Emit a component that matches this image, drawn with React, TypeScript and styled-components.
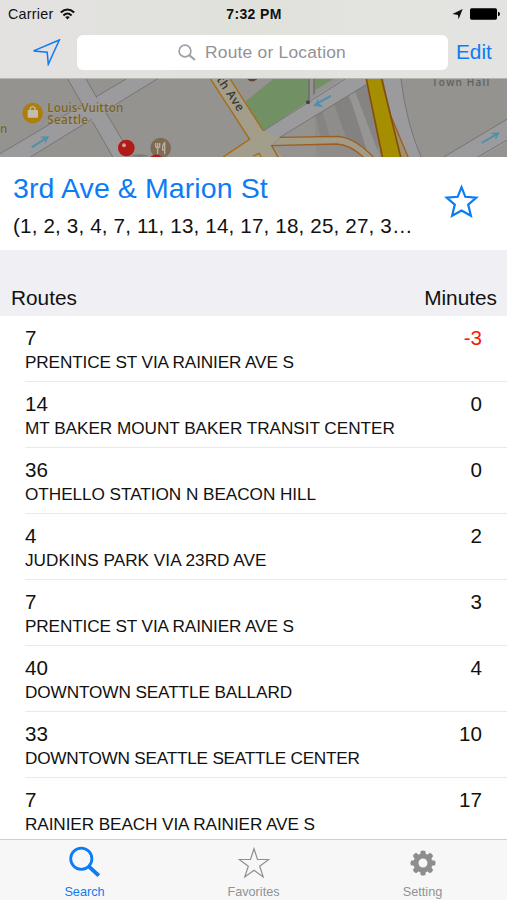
import React from "react";
import styled, { createGlobalStyle } from "styled-components";

const BLUE = "#0b7cf5";

const GlobalStyle = createGlobalStyle`
  * { box-sizing: border-box; }
  body { margin: 0; background: #fff; font-family: "Liberation Sans", Arial, sans-serif; color: #111; }
  svg { display: block; flex: none; }
`;

const Screen = styled.div`
  width: 507px;
  height: 900px;
  display: flex;
  flex-direction: column;
  overflow: hidden;
  background: #fff;
`;

const TopBar = styled.header`
  flex: none;
  height: 79px;
  background: linear-gradient(90deg, #e3e2e0 0%, #e1e1de 35%, #dfe1da 50%, #e3e3df 70%, #e3e3e2 100%);
  border-bottom: 1px solid #b4b3b1;
`;

const StatusBar = styled.div`
  height: 28px;
  display: grid;
  grid-template-columns: 1fr auto 1fr;
  align-items: center;
  padding: 0 7px 0 8px;
`;

const Carrier = styled.div`
  display: flex;
  align-items: center;
  gap: 7px;
  font-size: 14.4px;
  letter-spacing: 0.2px;
  line-height: 28px;
`;

const Clock = styled.div`
  font-size: 14px;
  font-weight: 700;
  letter-spacing: 0.35px;
  line-height: 28px;
`;

const StatusIcons = styled.div`
  display: flex;
  align-items: center;
  justify-content: flex-end;
  gap: 7px;
`;

const NavRow = styled.div`
  display: flex;
  align-items: center;
  height: 48px;
  padding: 0 15px 0 32px;
`;

const SearchField = styled.div`
  display: flex;
  align-items: center;
  justify-content: center;
  gap: 9px;
  width: 371px;
  height: 35px;
  margin: 0 8px 0 16px;
  padding-right: 1px;
  border-radius: 6px;
  background: #fff;
  color: #929295;
  font-size: 17.4px;
  letter-spacing: 0.22px;
`;

const EditButton = styled.div`
  color: ${BLUE};
  font-size: 20.8px;
  line-height: 24px;
`;

const MapStrip = styled.div`
  flex: none;
  height: 78px;
`;

const StopHeader = styled.section`
  flex: none;
  height: 93px;
  display: flex;
  justify-content: space-between;
  background: #fff;
  padding: 13px 28px 0 13px;
`;

const StopText = styled.div`
  display: flex;
  flex-direction: column;
`;

const StopName = styled.div`
  color: ${BLUE};
  font-size: 28.5px;
  letter-spacing: 0.1px;
  line-height: 36px;
`;

const StopRoutes = styled.div`
  font-size: 20.6px;
  letter-spacing: 0.16px;
  line-height: 40px;
  white-space: nowrap;
`;

const StarSlot = styled.div`
  padding-top: 14px;
`;

const ColumnHeader = styled.div`
  flex: none;
  height: 66px;
  display: flex;
  justify-content: space-between;
  align-items: flex-end;
  padding: 0 10px 6px 11px;
  background: #efeff4;
  font-size: 20.8px;
  line-height: 24px;
`;

const List = styled.div`
  flex: none;
  height: 523px;
  overflow: hidden;
`;

const Row = styled.div`
  height: 66px;
  margin-left: 25px;
  padding: 10px 25px 0 0;
  display: flex;
  justify-content: space-between;
  border-bottom: 1px solid #e9e9eb;
`;

const RouteInfo = styled.div`
  display: flex;
  flex-direction: column;
  gap: 1px;
`;

const RouteNumber = styled.div`
  font-size: 20.6px;
  line-height: 24px;
`;

const Destination = styled.div<{ $spacing: number }>`
  font-size: 17.2px;
  line-height: 22px;
  white-space: nowrap;
  letter-spacing: ${(p) => p.$spacing}px;
`;

const Minutes = styled.div<{ $late?: boolean }>`
  font-size: 20.6px;
  line-height: 24px;
  color: ${(p) => (p.$late ? "#fb150f" : "#111")};
`;

const TabBar = styled.nav`
  flex: none;
  height: 61px;
  display: grid;
  grid-template-columns: repeat(3, 1fr);
  background: #f7f7f7;
  border-top: 1px solid #d0d0d0;
`;

const Tab = styled.div<{ $active?: boolean }>`
  display: flex;
  flex-direction: column;
  align-items: center;
  padding-top: 6px;
  gap: 5px;
  color: ${(p) => (p.$active ? BLUE : "#929292")};
  font-size: 12.7px;
  line-height: 16px;
`;

const WifiIcon = () => (
  <svg width="15" height="12" viewBox="0 0 15 12" fill="none" stroke="#111" strokeWidth="2">
    <path d="M.8 4.6Q7.5-1.6 14.2 4.6" />
    <path d="M3.4 7.4Q7.5 3.6 11.6 7.4" />
    <path d="M7.5 11.6 5.2 9.1Q7.5 7.2 9.8 9.1Z" fill="#111" stroke="none" />
  </svg>
);

const LocationIcon = () => (
  <svg width="11" height="11" viewBox="0 0 11 11">
    <path d="M10.7 0 6.6 10.3 5.9 6 .4 5.1Z" fill="#111" />
  </svg>
);

const BatteryIcon = () => (
  <svg width="30" height="12" viewBox="0 0 30 12">
    <rect x="0" y=".3" width="27" height="11.4" rx="1.6" fill="#000" />
    <path d="M28 3.8q2 .3 2 2.2t-2 2.2z" fill="#000" />
  </svg>
);

const ArrowIcon = () => (
  <svg width="29" height="27" viewBox="0 0 29 27" fill="none" stroke={BLUE} strokeWidth="1.5">
    <path d="M27.3 1 1.6 11.9 15.2 13.2 16.3 25.3Z" />
  </svg>
);

const SmallSearchIcon = () => (
  <svg width="18" height="17" viewBox="0 0 18 17" fill="none" stroke="#a2a2a5" strokeWidth="1.7">
    <circle cx="7" cy="7" r="5.9" />
    <path d="M11.2 11.2 17 16" strokeWidth="2.2" />
  </svg>
);

const BlueStar = () => (
  <svg width="35" height="34" viewBox="0 0 35 34" fill="none" stroke={BLUE} strokeWidth="2.2">
    <path d="M17.5 3.2 21.3 12.8 32.3 13.7 24.2 20.6 26.9 31.8 17.5 26.6 8.1 31.8 10.8 20.6 2.7 13.7 13.7 12.8Z" />
  </svg>
);

const SearchTabIcon = () => (
  <svg width="32" height="33" viewBox="0 0 32 33" fill="none" stroke={BLUE}>
    <circle cx="12.3" cy="12.7" r="10.6" strokeWidth="2.8" />
    <path d="M20 20.6 29.8 29.6" strokeWidth="4" />
  </svg>
);

const StarTabIcon = () => (
  <svg width="32" height="33" viewBox="0 0 32 33" fill="none" stroke="#8e8e8e" strokeWidth="1.2">
    <path d="M16 2.8 19.5 13.5 30.8 13.5 21.7 20.2 25.2 30.9 16 24.3 6.8 30.9 10.3 20.2 1.2 13.5 12.5 13.5Z" />
  </svg>
);

const GearIcon = () => (
  <svg width="32" height="33" viewBox="-16 -17 32 33">
    <circle r="7" fill="none" stroke="#8e8e8e" strokeWidth="5" />
    {[0, 45, 90, 135, 180, 225, 270, 315].map((angle) => (
      <path key={angle} d="M-3-8-2.3-12.1Q0-13.1 2.3-12.1L3-8Z" fill="#8e8e8e" transform={`rotate(${angle})`} />
    ))}
  </svg>
);

const MapDrawing = () => (
  <svg width="507" height="78" viewBox="0 9 1521 234" preserveAspectRatio="none">
    <rect width="1521" height="252" fill="#949390" />
    <path d="M-30 251 385 5H478L88 245Z" fill="#9b9b9d" stroke="#777674" strokeWidth="3" />
    <path d="M205 9 340 243H378L366 193 256 9Z" fill="#9b9b9d" />
    <path d="M248 88 201 5M291 66 256 5M277 136 340 246M317 109 372 200" stroke="#777674" strokeWidth="3" fill="none" />

    <path d="M820 9H928V84L790 165 759 115 737 76Z" fill="#719064" />
    <path d="M945 9H1000L942 44Z" fill="#719064" />
    <path d="M927 5V80M942 5V55" stroke="#73716f" strokeWidth="5" />
    <path d="M940 90 1070 25 1150 243H950Z" fill="#8e8d8a" />
    <path d="M942 100 962 90 990 184H962Z" fill="#858482" />
    <path d="M1003 85 1043 60 1110 184 1125 243 1040 190Z" fill="#838280" />
    <path d="M1046 52 1065 45 1140 243H1107Z" fill="#979694" />
    <path d="M1065 45 1098 25 1145 200 1130 215Z" fill="#858483" />
    <path d="M790 165 1030 5H1130L836 187 805 215 770 190Z" fill="#9b9b9d" />
    <path d="M790 165 1035 9M838 185 1112 18" stroke="#777674" strokeWidth="3" fill="none" />
    <circle cx="924" cy="79" r="6" fill="#444" />

    <path d="M629 5 749 190 665 246H850L815 207 836 185 790 165 690 5Z" fill="#a29e8b" />
    <path d="M629 5 749 190 665 246M688 5 790 165M759 240 778 232 784 243" stroke="#a66b13" strokeWidth="4" fill="none" />
    <path d="M840 184H1015Q1065 186 1120 243H1090Q1047 203 1010 204L821 209Z" fill="#a29c86" />
    <path d="M840 184 1015 181Q1065 186 1120 243M836 246 815 209 1010 204Q1047 205 1090 243" fill="none" stroke="#9d5d21" strokeWidth="4" />
    <path d="M742 9Q756 24 772 9Z" fill="#61422d" />

    <path d="M1144 5 1167 110 1220 245H1264Q1216 130 1202 5Z" fill="#9b9b9d" />
    <path d="M1202 5Q1220 145 1264 245M1147 5Q1160 70 1171 110" stroke="#777674" strokeWidth="3" fill="none" />
    <path d="M1160 90 1226 247H1200Z" fill="#a08f6a" stroke="#9d5d21" strokeWidth="4" />
    <path d="M1098 5H1144L1203 247H1148Z" fill="#a58e00" stroke="#83500c" strokeWidth="5" />

    <path d="M1320 250 1530 126V194L1430 250Z" fill="#9b9b9d" />
    <path d="M1330 244 1530 124M1425 248 1530 187" stroke="#777674" strokeWidth="3" />

    <g stroke="#4d91ae" strokeWidth="6" fill="none">
      <path d="M95 214 138 187" />
      <path d="M992 60 952 82" />
      <path d="M1445 201 1488 176" />
    </g>
    <g fill="#4d91ae">
      <path d="M147 181 136 204 135 190 119 182Z" />
      <path d="M940 90 955 68 956 80 970 93Z" />
      <path d="M1499 169 1487 192 1486 178 1471 171Z" />
    </g>

    <circle cx="98" cy="111" r="31" fill="#ac7e0a" />
    <rect x="83" y="102" width="31" height="23" rx="3" fill="#c6bda8" />
    <path d="M91 102V96Q98 88 105 96V102" stroke="#c6bda8" strokeWidth="4" fill="none" />
    <g fontFamily="Open Sans, sans-serif" fontWeight="600">
      <g fill="#7a6326" stroke="#a3a09a" strokeWidth="3" paintOrder="stroke" fontSize="35">
        <text x="142" y="107" textLength="228">Louis-Vuitton</text>
        <text x="142" y="143" textLength="122">Seattle</text>
        <text x="0" y="170">n</text>
      </g>
      <text x="1296" y="29" fill="#62615f" fontSize="30" textLength="172">Town Hall</text>
      <text transform="translate(644 4) rotate(56)" x="-14" y="0" fill="#3b3a38" stroke="#a29e8b" strokeWidth="3" paintOrder="stroke" fontSize="36" textLength="140">5th Ave</text>
    </g>
    <circle cx="482" cy="216" r="31" fill="#7f6b53" />
    <path d="M467 201V212Q473 220 479 212V201M473 201V234M494 235V200Q486 207 488 222H494" stroke="#b9b1a6" strokeWidth="4" fill="none" />
    <path d="M450 243Q468 228 487 243Z" fill="#b01b19" />
    <ellipse cx="420" cy="239" rx="24" ry="4" fill="#7c7b78" />
    <circle cx="379" cy="216" r="25" fill="#b01b19" />
    <circle cx="372" cy="208" r="6" fill="#df9892" />
  </svg>
);

type Departure = { route: string; destination: string; minutes: string; spacing: number };

const departures: Departure[] = [
  { route: "7", destination: "PRENTICE ST VIA RAINIER AVE S", minutes: "-3", spacing: -0.13 },
  { route: "14", destination: "MT BAKER MOUNT BAKER TRANSIT CENTER", minutes: "0", spacing: -0.04 },
  { route: "36", destination: "OTHELLO STATION N BEACON HILL", minutes: "0", spacing: -0.05 },
  { route: "4", destination: "JUDKINS PARK VIA 23RD AVE", minutes: "2", spacing: 0.02 },
  { route: "7", destination: "PRENTICE ST VIA RAINIER AVE S", minutes: "3", spacing: -0.13 },
  { route: "40", destination: "DOWNTOWN SEATTLE BALLARD", minutes: "4", spacing: -0.11 },
  { route: "33", destination: "DOWNTOWN SEATTLE SEATTLE CENTER", minutes: "10", spacing: -0.23 },
  { route: "7", destination: "RAINIER BEACH VIA RAINIER AVE S", minutes: "17", spacing: -0.1 },
];

export default function App() {
  return (
    <>
      <GlobalStyle />
      <Screen>
        <TopBar>
          <StatusBar>
            <Carrier>Carrier <WifiIcon /></Carrier>
            <Clock>7:32 PM</Clock>
            <StatusIcons><LocationIcon /><BatteryIcon /></StatusIcons>
          </StatusBar>
          <NavRow>
            <ArrowIcon />
            <SearchField><SmallSearchIcon />Route or Location</SearchField>
            <EditButton>Edit</EditButton>
          </NavRow>
        </TopBar>
        <MapStrip><MapDrawing /></MapStrip>
        <StopHeader>
          <StopText>
            <StopName>3rd Ave &amp; Marion St</StopName>
            <StopRoutes>(1, 2, 3, 4, 7, 11, 13, 14, 17, 18, 25, 27, 3…</StopRoutes>
          </StopText>
          <StarSlot><BlueStar /></StarSlot>
        </StopHeader>
        <ColumnHeader><span>Routes</span><span>Minutes</span></ColumnHeader>
        <List>
          {departures.map((d, i) => (
            <Row key={i}>
              <RouteInfo>
                <RouteNumber>{d.route}</RouteNumber>
                <Destination $spacing={d.spacing}>{d.destination}</Destination>
              </RouteInfo>
              <Minutes $late={d.minutes.startsWith("-")}>{d.minutes}</Minutes>
            </Row>
          ))}
        </List>
        <TabBar>
          <Tab $active><SearchTabIcon />Search</Tab>
          <Tab><StarTabIcon />Favorites</Tab>
          <Tab><GearIcon />Setting</Tab>
        </TabBar>
      </Screen>
    </>
  );
}
